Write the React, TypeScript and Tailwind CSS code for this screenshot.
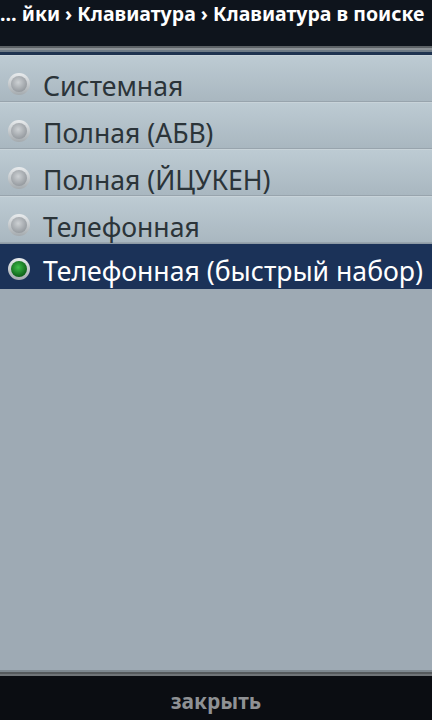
import React from "react";

const items = [
  "Системная",
  "Полная (АБВ)",
  "Полная (ЙЦУКЕН)",
  "Телефонная",
  "Телефонная (быстрый набор)",
];

function Radio({ on }: { on: boolean }) {
  return (
    <svg width="24" height="24" viewBox="0 0 24 24" className="block shrink-0">
      <defs>
        <radialGradient id={on ? "rg-on" : "rg-off"} cx="45%" cy="40%" r="60%">
          {on ? (
            <>
              <stop offset="0%" stopColor="#3fbf4a" />
              <stop offset="100%" stopColor="#0c5e16" />
            </>
          ) : (
            <>
              <stop offset="0%" stopColor="#cdd1d4" />
              <stop offset="100%" stopColor="#959a9f" />
            </>
          )}
        </radialGradient>
        <linearGradient id={on ? "ring-on" : "ring-off"} x1="0" y1="0" x2="0" y2="1">
          <stop offset="0%" stopColor="#e9ecee" />
          <stop offset="100%" stopColor="#a4aaae" />
        </linearGradient>
      </defs>
      <circle cx="12" cy="12" r="11" fill={`url(#${on ? "ring-on" : "ring-off"})`} />
      <circle cx="12" cy="12" r="8" fill={`url(#${on ? "rg-on" : "rg-off"})`} />
    </svg>
  );
}

export default function App() {
  return (
    <div
      className="w-[432px] h-[720px] flex flex-col bg-[#9eaab4] overflow-hidden"
      style={{ fontFamily: '"Noto Sans", "Open Sans", sans-serif' }}
    >
      <div className="h-[46px] bg-[#0e141c] flex items-start pt-[2px] overflow-hidden">
        <div className="text-white font-bold text-[19.5px] whitespace-nowrap leading-[24px]">
          … йки › Клавиатура › Клавиатура в поиске
        </div>
      </div>
      <div className="h-[2px] bg-[#5c6266]" />
      <div className="h-[2px] bg-[#8c9296]" />
      <div className="h-[2px] bg-[#6e7b86]" />
      <div className="h-[3px] bg-[#1e3350]" />
      <div className="flex flex-col">
        {items.map((t, i) => {
          const on = i === 4;
          return (
            <div
              key={t}
              className={
                on
                  ? "h-[46px] flex items-start gap-[12px] pl-[7px] bg-[#1b3258] text-white border-t border-[#8d9aa5]"
                  : "h-[47px] flex items-start gap-[12px] pl-[7px] bg-gradient-to-b from-[#bdcbd3] to-[#a9b7c0] text-[#2b3439] border-t border-[#c8d3d9] border-b border-b-[#98a4ad]"
              }
            >
              <div className={on ? "mt-[13px]" : "mt-[16px]"}>
                <Radio on={on} />
              </div>
              <span
                className={
                  on
                    ? "mt-[14px] text-[26.6px] leading-[26px] whitespace-nowrap"
                    : "mt-[17px] text-[26.6px] leading-[26px] whitespace-nowrap"
                }
              >
                {t}
              </span>
            </div>
          );
        })}
      </div>
      <div className="flex-1" />
      <div className="h-[2px] bg-[#7e8890]" />
      <div className="h-[2px] bg-[#55595c]" />
      <div className="h-[2px] bg-[#707478]" />
      <div className="h-[44px] bg-[#0b0d12] flex items-center justify-center">
        <span className="text-[#8f9194] font-bold text-[21px] pt-[8px]">закрыть</span>
      </div>
    </div>
  );
}
